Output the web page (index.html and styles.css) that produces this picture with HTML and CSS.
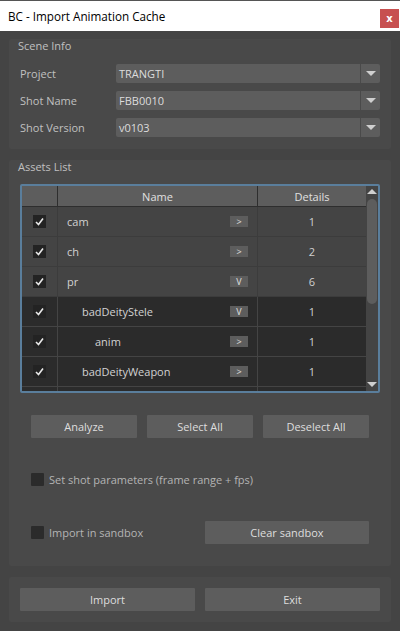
FILE: index.html
```html
<!DOCTYPE html>
<html>
<head>
<meta charset="utf-8">
<link rel="stylesheet" href="styles.css">
</head>
<body>
<div class="titlebar">
  <span class="title">BC - Import Animation Cache</span>
  <span class="close">x</span>
</div>
<div class="main">
  <section class="group scene">
    <div class="group-title">Scene Info</div>
    <div class="form">
      <div class="field"><span class="label">Project</span><div class="combo"><span class="combo-text">TRANGTI</span><span class="combo-arrow"></span></div></div>
      <div class="field"><span class="label">Shot Name</span><div class="combo"><span class="combo-text">FBB0010</span><span class="combo-arrow"></span></div></div>
      <div class="field"><span class="label">Shot Version</span><div class="combo"><span class="combo-text">v0103</span><span class="combo-arrow"></span></div></div>
    </div>
  </section>

  <section class="group assets">
    <div class="group-title">Assets List</div>
    <div class="tree">
      <div class="tree-body">
        <div class="tree-header">
          <div class="hcell"></div>
          <div class="hcell">Name</div>
          <div class="hcell">Details</div>
        </div>
        <div class="trow top">
          <div class="cell c-check"><span class="cb"><svg viewBox="0 0 13 13"><path d="M3 7 L5.5 9.5 L10 3.5"/></svg></span></div>
          <div class="cell c-name"><span class="nm">cam</span><span class="mini">&gt;</span></div>
          <div class="cell c-det">1</div>
        </div>
        <div class="trow top">
          <div class="cell c-check"><span class="cb"><svg viewBox="0 0 13 13"><path d="M3 7 L5.5 9.5 L10 3.5"/></svg></span></div>
          <div class="cell c-name"><span class="nm">ch</span><span class="mini">&gt;</span></div>
          <div class="cell c-det">2</div>
        </div>
        <div class="trow top">
          <div class="cell c-check"><span class="cb"><svg viewBox="0 0 13 13"><path d="M3 7 L5.5 9.5 L10 3.5"/></svg></span></div>
          <div class="cell c-name"><span class="nm">pr</span><span class="mini">V</span></div>
          <div class="cell c-det">6</div>
        </div>
        <div class="trow">
          <div class="cell c-check"><span class="cb"><svg viewBox="0 0 13 13"><path d="M3 7 L5.5 9.5 L10 3.5"/></svg></span></div>
          <div class="cell c-name"><span class="nm lvl1">badDeityStele</span><span class="mini">V</span></div>
          <div class="cell c-det">1</div>
        </div>
        <div class="trow">
          <div class="cell c-check"><span class="cb"><svg viewBox="0 0 13 13"><path d="M3 7 L5.5 9.5 L10 3.5"/></svg></span></div>
          <div class="cell c-name"><span class="nm lvl2">anim</span><span class="mini">&gt;</span></div>
          <div class="cell c-det">1</div>
        </div>
        <div class="trow">
          <div class="cell c-check"><span class="cb"><svg viewBox="0 0 13 13"><path d="M3 7 L5.5 9.5 L10 3.5"/></svg></span></div>
          <div class="cell c-name"><span class="nm lvl1">badDeityWeapon</span><span class="mini">&gt;</span></div>
          <div class="cell c-det">1</div>
        </div>
        <div class="trow">
          <div class="cell c-check"></div>
          <div class="cell c-name"></div>
          <div class="cell c-det"></div>
        </div>
      </div>
      <div class="scrollbar">
        <span class="sb-up"></span>
        <span class="sb-handle"></span>
        <span class="sb-down"></span>
      </div>
    </div>
    <div class="btn-row">
      <button class="btn">Analyze</button>
      <button class="btn">Select All</button>
      <button class="btn">Deselect All</button>
    </div>
    <div class="opt-row">
      <span class="box"></span><span class="opt-label">Set shot parameters (frame range + fps)</span>
    </div>
    <div class="sandbox-row">
      <div class="sandbox-check"><span class="box"></span><span class="opt-label">Import in sandbox</span></div>
      <button class="btn wide">Clear sandbox</button>
    </div>
  </section>

  <section class="group footer">
    <button class="btn">Import</button>
    <button class="btn">Exit</button>
  </section>
</div>
</body>
</html>
```

FILE: styles.css
```css
* { box-sizing: border-box; }
html, body { margin: 0; padding: 0; }
body {
  background: #444444;
  font-family: "Open Sans", "Noto Sans", sans-serif;
  font-size: 11px;
  color: #c8c8c8;
  width: 400px;
  height: 631px;
  overflow: hidden;
}

.titlebar {
  height: 31px;
  background: #ffffff;
  border-top: 1px solid #555;
  display: flex;
  align-items: center;
  justify-content: space-between;
  padding-left: 8px;
  padding-right: 1px;
}
.title {
  color: #000;
  font-size: 11.7px;
  font-family: "Open Sans", sans-serif;
}
.close {
  width: 19px;
  height: 19px;
  margin-top: 4px;
  background: #c75050;
  color: #fff;
  font-weight: bold;
  font-size: 10px;
  display: flex;
  align-items: center;
  justify-content: center;
  font-family: "DejaVu Sans", sans-serif;
}

.main {
  padding: 0 9px;
}

.group {
  background: #494949;
  border-radius: 2px;
}
.group-title {
  height: 14px;
  line-height: 14px;
  margin-top: -6px;
  margin-left: -2px;
  color: #c0c0c0;
}

.scene {
  margin-top: 14px;
  padding: 0 11px 12px 11px;
}
.form {
  margin-top: 11px;
  display: flex;
  flex-direction: column;
  gap: 8px;
}
.field {
  display: flex;
  align-items: center;
  height: 19px;
}
.label {
  width: 96px;
  color: #c0c0c0;
}
.combo {
  flex: 1;
  height: 19px;
  background: #5d5d5d;
  border-radius: 2px;
  display: flex;
  align-items: center;
}
.combo-text {
  flex: 1;
  padding-left: 3px;
  color: #dcdcdc;
}
.combo-arrow {
  width: 20px;
  height: 19px;
  border-left: 1px solid #4a4a4a;
  display: flex;
  align-items: center;
  justify-content: center;
}
.combo-arrow::after {
  content: "";
  border-left: 5px solid transparent;
  border-right: 5px solid transparent;
  border-top: 5px solid #cfcfcf;
}

.assets {
  margin-top: 17px;
  padding: 0 11px 22px 11px;
}
.tree {
  margin-top: 10px;
  height: 209px;
  border: 2px solid #5a7e9c;
  border-radius: 2px;
  display: flex;
  overflow: hidden;
  background: #2b2b2b;
}
.tree-body {
  flex: 1;
  overflow: hidden;
}
.tree-header {
  display: grid;
  grid-template-columns: 36px 200px 108px;
  height: 21px;
  background: #5d5d5d;
  border-bottom: 1px solid #2e2e2e;
}
.hcell {
  display: flex;
  align-items: center;
  justify-content: center;
  color: #e0e0e0;
  border-right: 1px solid #2e2e2e;
}
.hcell:last-child { border-right: none; }

.trow {
  display: grid;
  grid-template-columns: 36px 200px 108px;
  height: 30px;
  background: #2b2b2b;
  border-bottom: 1px solid #444;
}
.trow .cell { border-right: 1px solid #444; }
.trow .cell:last-child { border-right: none; }
.trow.top {
  background: #444444;
  border-bottom-color: #3c3c3c;
}
.trow.top .cell { border-right-color: #3c3c3c; }

.cell {
  display: flex;
  align-items: center;
}
.c-check { justify-content: center; }
.c-name { justify-content: space-between; padding-left: 9px; padding-right: 9px; }
.c-det { justify-content: center; color: #d0d0d0; }
.nm { color: #d2d2d2; }
.lvl1 { padding-left: 15px; }
.lvl2 { padding-left: 28px; }

.cb {
  width: 13px;
  height: 13px;
  background: #232323;
  display: block;
}
.cb svg {
  width: 13px;
  height: 13px;
  display: block;
}
.cb path {
  fill: none;
  stroke: #e8e8e8;
  stroke-width: 1.6;
}
.mini {
  width: 18px;
  height: 11px;
  background: #5d5d5d;
  color: #e0e0e0;
  font-size: 9px;
  line-height: 11px;
  text-align: center;
}

.scrollbar {
  width: 12px;
  background: #444444;
  display: flex;
  flex-direction: column;
  align-items: center;
}
.sb-up {
  margin-top: 3px;
  border-left: 5px solid transparent;
  border-right: 5px solid transparent;
  border-bottom: 5px solid #cfcfcf;
}
.sb-handle {
  margin-top: 5px;
  width: 10px;
  height: 105px;
  background: #5d5d5d;
  border-radius: 5px;
}
.sb-down {
  margin-top: auto;
  margin-bottom: 4px;
  border-left: 5px solid transparent;
  border-right: 5px solid transparent;
  border-top: 5px solid #cfcfcf;
}

.btn {
  font-family: inherit;
  font-size: 11px;
  color: #dedede;
  background: #5d5d5d;
  border: none;
  border-radius: 1px;
  height: 23px;
  padding: 0;
}
.btn-row {
  margin-top: 22px;
  padding: 0 11px;
  display: grid;
  grid-template-columns: repeat(3, 1fr);
  gap: 10px;
}
.opt-row {
  margin-top: 35px;
  padding-left: 11px;
  display: flex;
  align-items: center;
  height: 13px;
}
.box {
  width: 13px;
  height: 13px;
  background: #2b2b2b;
  border-radius: 1px;
  margin-right: 5px;
  flex: none;
}
.opt-label { color: #b4b4b4; }
.sandbox-row {
  margin-top: 35px;
  padding: 0 11px;
  display: flex;
  align-items: center;
  justify-content: space-between;
}
.sandbox-check { display: flex; align-items: center; }
.wide { width: 164px; }

.footer {
  margin-top: 11px;
  padding: 11px;
  display: grid;
  grid-template-columns: 1fr 1fr;
  gap: 10px;
}
```
